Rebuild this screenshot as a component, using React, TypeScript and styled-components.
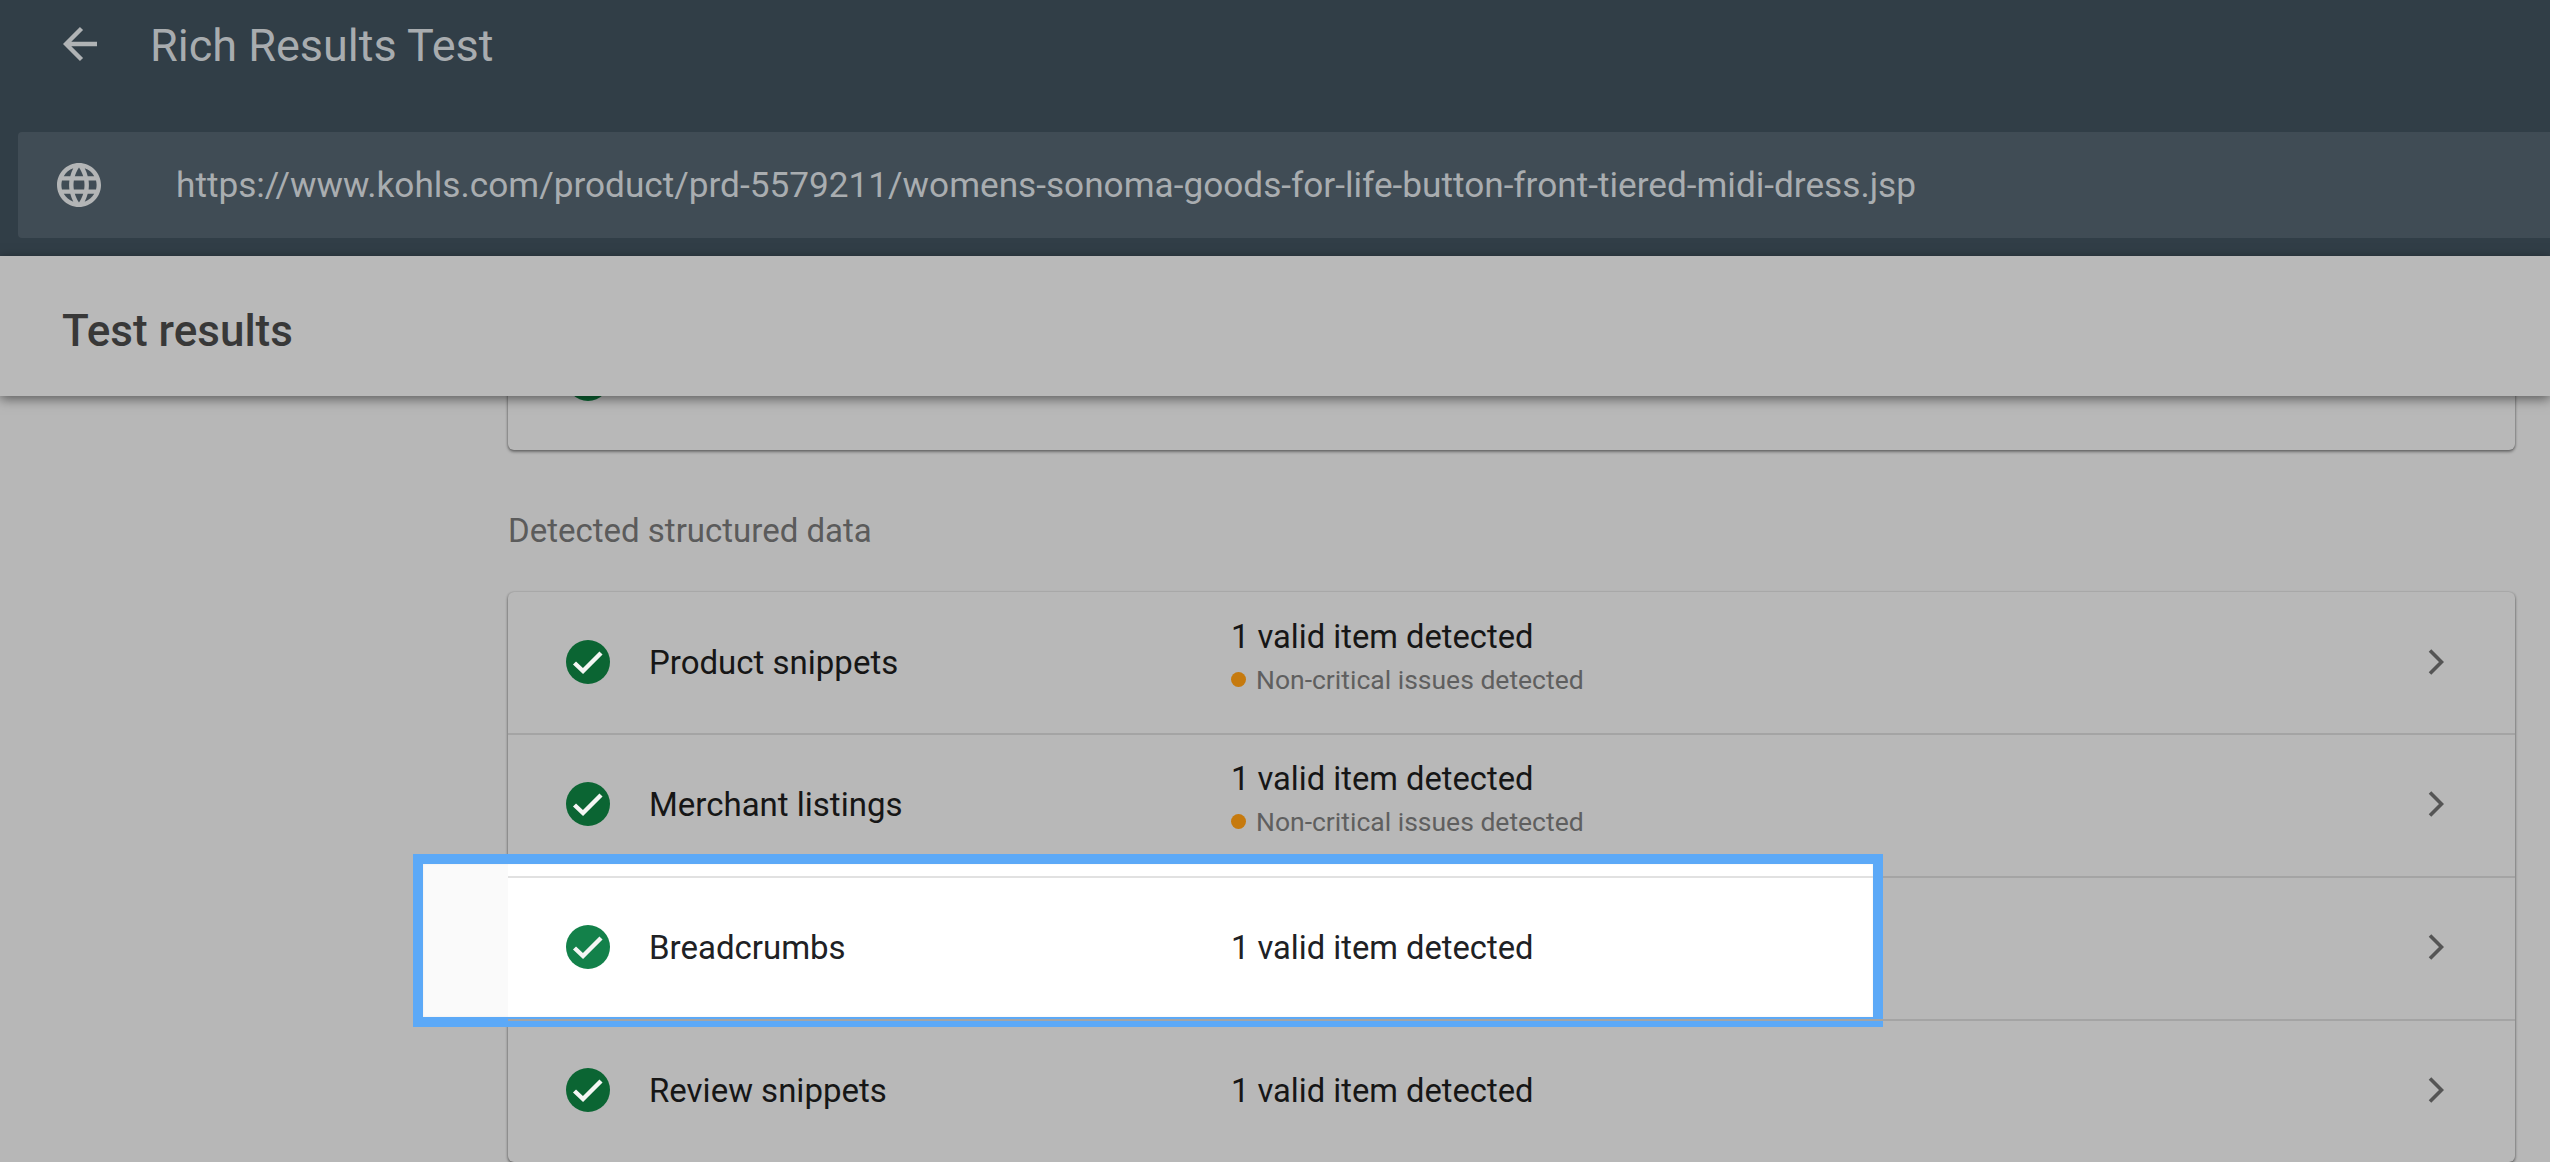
import React from "react";
import styled, { createGlobalStyle } from "styled-components";

const GlobalStyle = createGlobalStyle`
  html, body {
    margin: 0;
    height: 100%;
    overflow: hidden;
    background: #b7b7b7;
    font-family: Roboto, "Liberation Sans", sans-serif;
  }
`;

const Page = styled.div`
  width: 2550px;
  height: 1162px;
  overflow: hidden;
  background: #b7b7b7;
`;

const Header = styled.header`
  height: 256px;
  box-sizing: border-box;
  padding-left: 18px;
  background: #313e47;
`;

const Toolbar = styled.div`
  display: flex;
  align-items: center;
  height: 88px;
  margin-bottom: 44px;
  padding-left: 45px;
`;

const BackIcon = styled.svg`
  width: 34px;
  height: 36px;
  margin-right: 53px;
  color: #b0b3b5;
`;

const Title = styled.h1`
  margin: 0;
  padding-top: 3px;
  font-size: 45px;
  font-weight: 400;
  color: #a8acaf;
`;

const UrlBar = styled.div`
  display: flex;
  align-items: center;
  height: 106px;
  padding-left: 39px;
  border-radius: 4px 0 0 4px;
  background: #404c55;
`;

const GlobeIcon = styled.svg`
  flex: none;
  width: 44px;
  height: 44px;
  margin-right: 75px;
  color: #b3b5b6;
`;

const UrlText = styled.span`
  font-size: 35.2px;
  color: #a9adb0;
`;

const ResultsBar = styled.div`
  position: relative;
  z-index: 3;
  display: flex;
  align-items: center;
  height: 140px;
  box-sizing: border-box;
  padding: 10px 0 0 62px;
  background: #b9b9b9;
  box-shadow: 0 3px 11px rgba(0, 0, 0, 0.5);
`;

const ResultsTitle = styled.h2`
  margin: 0;
  font-size: 44px;
  font-weight: 500;
  color: #383838;
`;

const Content = styled.main`
  padding: 0 35px 0 508px;
`;

const Card = styled.section`
  border-radius: 6px;
  background: #b8b8b8;
  box-shadow: 0 2px 3px rgba(0, 0, 0, 0.4), 1px 0 2px rgba(0, 0, 0, 0.12),
    -1px 0 2px rgba(0, 0, 0, 0.12);
`;

const ScrolledCard = styled(Card)`
  margin-top: -89px;
`;

const SectionLabel = styled.h3`
  margin: 0;
  padding: 51px 0 32px;
  font-size: 33px;
  line-height: 59px;
  font-weight: 400;
  color: #5b5b5b;
`;

const Row = styled.div<{ $first?: boolean }>`
  position: relative;
  display: flex;
  align-items: center;
  height: ${({ $first }) => ($first ? 141 : 143)}px;
  box-sizing: border-box;
  padding: 0 0 ${({ $first }) => ($first ? 2 : 4)}px 58px;
  border-top: ${({ $first }) => ($first ? "none" : "2px solid #a4a4a4")};
`;

const ScrolledRow = styled(Row)`
  height: 143px;
  padding-bottom: 0;
`;

const Spotlight = styled.div`
  position: absolute;
  top: -24px;
  left: -95px;
  width: 1470px;
  height: 173px;
  box-sizing: border-box;
  border: 10px solid #5ca9f7;
  background: linear-gradient(to right, #fafafa 85px, #fff 85px);
  box-shadow: inset 0 0 2px rgba(0, 0, 0, 0.08);

  &::after {
    content: "";
    position: absolute;
    top: 12px;
    left: 85px;
    right: 0;
    height: 2px;
    background: #e1e1e1;
  }
`;

const CheckIcon = styled.svg<{ $lit?: boolean }>`
  position: relative;
  flex: none;
  width: 44px;
  height: 44px;
  margin-right: 39px;
  color: ${({ $lit }) => ($lit ? "#13814a" : "#0b6533")};
`;

const Name = styled.div<{ $lit?: boolean }>`
  position: relative;
  flex: none;
  width: 582px;
  padding-top: 2px;
  font-size: 33px;
  color: ${({ $lit }) => ($lit ? "#202124" : "#161616")};
  white-space: nowrap;
`;

const ScrolledName = styled(Name)`
  padding: 0 0 5px;
`;

const Status = styled.div`
  position: relative;
  flex: 1;
  padding-top: 2px;
`;

const StatusLine = styled.div<{ $lit?: boolean }>`
  font-size: 32.7px;
  line-height: 44px;
  color: ${({ $lit }) => ($lit ? "#202124" : "#161616")};
`;

const Note = styled.div`
  display: flex;
  align-items: center;
  margin-bottom: 10px;
  font-size: 26.5px;
  line-height: 42px;
  color: #5f5f5f;
`;

const NoteDot = styled.span`
  flex: none;
  width: 15px;
  height: 15px;
  margin-right: 10px;
  border-radius: 50%;
  background: #c67a0e;
`;

const ChevronIcon = styled.svg`
  flex: none;
  width: 16px;
  height: 26px;
  margin-right: 71px;
  color: #555;
`;

const BackArrow = () => (
  <BackIcon viewBox="0 0 34 36" fill="none" stroke="currentColor" strokeWidth="4.4">
    <path d="M34 18H4M18.500 2.500 3 18l15.500 15.500" />
  </BackIcon>
);

const Globe = () => (
  <GlobeIcon viewBox="2 2 20 20" fill="currentColor">
    <path d="M11.99 2C6.47 2 2 6.480 2 12s4.470 10 9.990 10C17.520 22 22 17.520 22 12S17.520 2 11.990 2zm6.930 6h-2.950c-.32-1.250-.78-2.450-1.380-3.560 1.840.63 3.370 1.910 4.330 3.560zM12 4.040c.83 1.200 1.480 2.530 1.910 3.960h-3.820c.43-1.430 1.080-2.760 1.910-3.960zM4.260 14C4.100 13.360 4 12.690 4 12s.1-1.360.26-2h3.380c-.08.66-.14 1.320-.14 2 0 .68.06 1.340.14 2H4.260zm.82 2h2.950c.32 1.250.78 2.450 1.380 3.560-1.840-.63-3.370-1.900-4.330-3.560zm2.950-8H5.080c.96-1.660 2.490-2.930 4.330-3.560C8.810 5.550 8.350 6.750 8.030 8zM12 19.960c-.83-1.200-1.480-2.530-1.910-3.960h3.820c-.43 1.430-1.080 2.760-1.910 3.960zM14.340 14H9.660c-.09-.66-.16-1.320-.16-2 0-.68.07-1.350.16-2h4.680c.09.65.16 1.320.16 2 0 .68-.07 1.340-.16 2zm.25 5.560c.6-1.110 1.060-2.310 1.380-3.560h2.950c-.96 1.650-2.490 2.930-4.330 3.560zM16.360 14c.08-.66.14-1.320.14-2 0-.68-.06-1.340-.14-2h3.380c.16.64.26 1.310.26 2s-.1 1.360-.26 2h-3.380z" />
  </GlobeIcon>
);

const Check = ({ lit }: { lit?: boolean }) => (
  <CheckIcon $lit={lit} viewBox="0 0 44 44">
    <circle cx="22" cy="22" r="22" fill="currentColor" />
    <path d="M8.500 23 17 31 35 13" fill="none" stroke="#f4f6f4" strokeWidth="4.400" />
  </CheckIcon>
);

const Chevron = () => (
  <ChevronIcon viewBox="0 0 16 26" fill="none" stroke="currentColor" strokeWidth="3.600">
    <path d="M2 1.500 13.500 13 2 24.500" />
  </ChevronIcon>
);

interface Item {
  name: string;
  issues?: boolean;
  lit?: boolean;
}

const items: Item[] = [
  { name: "Product snippets", issues: true },
  { name: "Merchant listings", issues: true },
  { name: "Breadcrumbs", lit: true },
  { name: "Review snippets" },
];

const App: React.FC = () => {
  return (
    <Page>
      <GlobalStyle />
      <Header>
        <Toolbar>
          <BackArrow />
          <Title>Rich Results Test</Title>
        </Toolbar>
        <UrlBar>
          <Globe />
          <UrlText>
            https://www.kohls.com/product/prd-5579211/womens-sonoma-goods-for-life-button-front-tiered-midi-dress.jsp
          </UrlText>
        </UrlBar>
      </Header>
      <ResultsBar>
        <ResultsTitle>Test results</ResultsTitle>
      </ResultsBar>
      <Content>
        <ScrolledCard>
          <ScrolledRow $first>
            <Check />
            <ScrolledName>Crawled successfully on May 30, 2022</ScrolledName>
          </ScrolledRow>
        </ScrolledCard>
        <SectionLabel>Detected structured data</SectionLabel>
        <Card>
          {items.map((item, index) => (
            <Row key={item.name} $first={index === 0}>
              {item.lit && <Spotlight />}
              <Check lit={item.lit} />
              <Name $lit={item.lit}>{item.name}</Name>
              <Status>
                <StatusLine $lit={item.lit}>1 valid item detected</StatusLine>
                {item.issues && (
                  <Note>
                    <NoteDot />
                    Non-critical issues detected
                  </Note>
                )}
              </Status>
              <Chevron />
            </Row>
          ))}
        </Card>
      </Content>
    </Page>
  );
};

export default App;
